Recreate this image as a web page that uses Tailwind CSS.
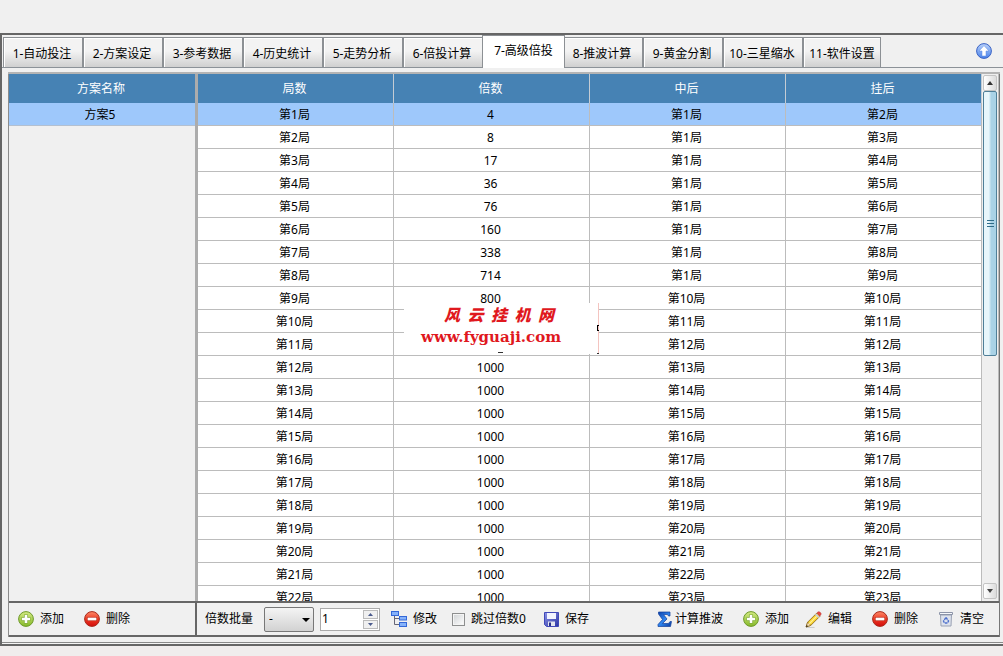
<!DOCTYPE html>
<html lang="zh-CN">
<head>
<meta charset="utf-8">
<title>高级倍投</title>
<script src="https://cdn.jsdelivr.net/npm/@tailwindcss/browser@4"></script>
</head>
<body class="flex h-screen flex-col bg-[#f0eded] text-xs text-black font-['Noto_Sans','Noto_Sans_CJK_SC',sans-serif]">
<svg class="absolute size-0" aria-hidden="true">
  <defs>
    <linearGradient id="gGreen" x1="0" y1="0" x2="0" y2="1"><stop offset="0" stop-color="#d3ea82"/><stop offset="1" stop-color="#86b92a"/></linearGradient>
    <linearGradient id="gRed" x1="0" y1="0" x2="0" y2="1"><stop offset="0" stop-color="#ff8a6a"/><stop offset=".5" stop-color="#ea3a24"/><stop offset="1" stop-color="#d40c0c"/></linearGradient>
    <linearGradient id="gBlue" x1="0" y1="0" x2="1" y2="1"><stop offset="0" stop-color="#0b3fa8"/><stop offset=".5" stop-color="#2f86f0"/><stop offset="1" stop-color="#0a3a9c"/></linearGradient>
    <linearGradient id="gUp" x1="0" y1="0" x2="0" y2="1"><stop offset="0" stop-color="#b9d2fb"/><stop offset="1" stop-color="#4a83ea"/></linearGradient>
    <linearGradient id="gDisk" x1="0" y1="0" x2="1" y2="1"><stop offset="0" stop-color="#8c94e6"/><stop offset="1" stop-color="#2a34a4"/></linearGradient>
    <symbol id="add" viewBox="0 0 16 16"><circle cx="8" cy="8" r="7.4" fill="url(#gGreen)" stroke="#6f9a2c"/><path d="M8 3.6v8.8M3.6 8h8.8" stroke="#7fa83a" stroke-width="4"/><path d="M8 4v8M4 8h8" stroke="#fff" stroke-width="2.6"/></symbol>
    <symbol id="del" viewBox="0 0 16 16"><circle cx="8" cy="8" r="7.4" fill="url(#gRed)" stroke="#a82a1c"/><rect x="3" y="6" width="10" height="4" rx=".6" fill="#b8200f"/><rect x="3.6" y="6.6" width="8.8" height="2.8" fill="#fff"/></symbol>
  </defs>
</svg>

<div class="h-[33px] shrink-0 bg-[#f0f0f0]"></div>

<main class="mb-[10px] flex min-h-0 flex-1 flex-col border-t-2 border-b-2 border-l-2 border-[#666] bg-[#f4f4f4] pb-px">
  <div class="flex min-h-0 flex-1 flex-col border-b border-[#8a8a8a] bg-[#f0f0f0] pb-[5px]">
    <nav class="flex h-[33px] shrink-0 items-end border-b border-[#8c9298] pl-px">
      <div id="tabs" role="tablist" class="flex items-end"></div>
      <button class="mr-[11px] mb-2 ml-auto block" aria-label="向上">
        <svg class="size-4" viewBox="0 0 16 16"><circle cx="8" cy="8" r="7.4" fill="url(#gUp)" stroke="#3a62c4"/><path d="M8 2.6 13 8h-3v5H6V8H3z" fill="#fff" stroke="#5b86e0" stroke-width=".5"/></svg>
      </button>
    </nav>

    <div class="mt-1 mr-[3px] ml-1.5 flex min-h-0 flex-1 border-t-2 border-[#b4b4b4]">
      <section class="flex w-[187px] shrink-0 flex-col border-l border-[#8c8c8c]">
        <div class="min-h-0 flex-1">
          <table class="w-full table-fixed border-separate border-spacing-0 text-center">
            <thead><tr><th class="h-[29px] bg-[#4682b4] p-0 pr-0.5 font-normal text-white">方案名称</th></tr></thead>
            <tbody><tr><td class="h-[23px] border-b border-[#b4c0d0] bg-[#9ec8fb] p-0 pt-0.5 pr-1">方案5</td></tr></tbody>
          </table>
        </div>
        <div class="flex h-9 shrink-0 items-center gap-5 border-y-2 border-b-[#666] border-t-[#666] pl-[9px]">
          <button class="flex items-center gap-1.5"><svg class="size-4"><use href="#add"/></svg>添加</button>
          <button class="flex items-center gap-1.5"><svg class="size-4"><use href="#del"/></svg>删除</button>
        </div>
      </section>

      <section class="flex min-w-0 flex-1 flex-col border-r border-[#777]">
        <div class="flex min-h-0 flex-1 border-l-3 border-[#acacac]">
          <div class="relative min-w-0 flex-1 overflow-hidden">
            <table class="w-full table-fixed border-separate border-spacing-0 bg-white text-center">
              <thead>
                <tr class="bg-[#4682b4] text-white">
                  <th class="h-[29px] border-r border-[#c4ccd4] p-0 pr-0.5 font-normal">局数</th>
                  <th class="h-[29px] border-r border-[#c4ccd4] p-0 pr-0.5 font-normal">倍数</th>
                  <th class="h-[29px] border-r border-[#c4ccd4] p-0 pr-0.5 font-normal">中后</th>
                  <th class="h-[29px] border-r border-[#c4ccd4] p-0 pr-0.5 font-normal">挂后</th>
                </tr>
              </thead>
              <tbody id="rows"></tbody>
            </table>
            <div class="absolute top-[229px] left-[206px] h-[51px] w-[195px] border-r border-[#f4c4c0] bg-white text-[#e0181e]">
              <div class="ml-10 flex h-[22px] w-[110px] items-center justify-between font-['Noto_Sans_CJK_SC',sans-serif] text-base leading-[22px] font-black italic"><span>风</span><span>云</span><span>挂</span><span>机</span><span>网</span></div>
              <div class="ml-[17px] h-6 font-['DejaVu_Serif',serif] text-[15px] leading-6 font-bold">www.fyguaji.com</div>
              <span class="absolute top-[22px] -right-px h-1.5 w-0.5 border border-r-0 border-black"></span>
              <span class="absolute -right-px bottom-0 h-px w-0.5 bg-[#333]"></span>
              <span class="absolute bottom-px left-[94px] h-px w-[5px] bg-[#333]"></span>
            </div>
          </div>
          <div class="flex w-[17px] shrink-0 flex-col border-r border-[#bbb] bg-[#efefef] pr-px pl-px">
            <button class="mt-px flex h-4 items-center justify-center rounded-xs border border-[#c4c4c4] bg-linear-to-r from-white to-[#dcdcdc]" aria-label="向上滚动"><svg class="h-1 w-1.5" viewBox="0 0 6 4"><path d="M0 4 3 0l3 4z" fill="#333"/></svg></button>
            <div class="flex h-[265px] items-center justify-center rounded-xs border border-[#4f7f98] bg-linear-to-r from-[#e8f6fb] from-40% to-[#a9d2e6] to-60%">
              <svg class="h-2 w-[7px]" viewBox="0 0 7 8"><path d="M0 .5h7M0 3.500h7M0 6.500h7" stroke="#2f6c88"/></svg>
            </div>
            <button class="mt-auto mb-0.5 flex h-4 items-center justify-center rounded-xs border border-[#c4c4c4] bg-linear-to-r from-white to-[#dcdcdc]" aria-label="向下滚动"><svg class="h-1 w-1.5" viewBox="0 0 6 4"><path d="M0 0 3 4l3-4z" fill="#444"/></svg></button>
          </div>
        </div>

        <div class="flex h-9 shrink-0 items-center justify-between border-y-2 border-l-2 border-[#666] pr-[15px] pl-2">
          <div class="flex items-center">
            <label for="op">倍数批量</label>
            <div class="relative ml-[11px]">
              <select id="op" class="block h-[25px] w-[50px] appearance-none rounded-xs border border-[#777] bg-linear-to-b from-[#f4f4f4] to-[#d2d2d2] pl-1"><option>-</option></select>
              <svg class="pointer-events-none absolute top-[11px] right-1 h-1 w-2" viewBox="0 0 8 4"><path d="M0 0h8L4 4z"/></svg>
            </div>
            <div class="ml-1.5 flex h-[23px] w-[60px] border border-[#aaa] bg-white">
              <input aria-label="倍数" value="1" class="w-[42px] min-w-0 pl-px outline-none">
              <div class="flex flex-1 flex-col gap-px py-px pr-px">
                <button class="flex flex-1 items-center justify-center border border-[#bbb] bg-[#f0f0f0]" aria-label="增加"><svg class="h-[3px] w-[5px]" viewBox="0 0 5 3"><path d="M0 3 2.500 0 5 3z" fill="#4a5a8c"/></svg></button>
                <button class="flex flex-1 items-center justify-center border border-[#bbb] bg-[#f0f0f0]" aria-label="减少"><svg class="h-[3px] w-[5px]" viewBox="0 0 5 3"><path d="M0 0 2.500 3 5 0z" fill="#4a5a8c"/></svg></button>
              </div>
            </div>
            <button class="ml-[11px] flex items-center gap-1.5"><svg class="size-4" viewBox="0 0 16 16" fill="#86b2fa" stroke="#3468d8"><path d="M3.500 5v8.500H9M3.500 7.500H9" fill="none" stroke="#667"/><rect x=".5" y=".5" width="7" height="4"/><rect x="8.500" y="5.500" width="7" height="3.500"/><rect x="8.500" y="11.500" width="7" height="4"/></svg>修改</button>
            <label class="ml-[15px] flex items-center gap-1.5"><input type="checkbox" class="size-[13px] appearance-none border border-[#8e8f8f] bg-linear-to-br from-[#cfd2d4] to-white shadow-[inset_0_0_0_1px_#f4f4f4]">跳过倍数0</label>
            <button class="ml-[18px] flex items-center gap-1.5"><svg class="h-[15px] w-[15px]" viewBox="0 0 15 15"><path d="M.5.5h14v14h-12l-2-2z" fill="url(#gDisk)" stroke="#4048b8"/><path d="M3 1h9v6H3z" fill="#f2f4ff"/><path d="M4 9.500h7V14H4z" fill="#e4e6f0"/><path d="M5 10.500h2V14H5z" fill="#28308c"/></svg>保存</button>
          </div>
          <div class="flex items-center gap-5">
            <button class="flex items-center gap-0.5"><svg class="size-4" viewBox="0 0 16 16"><path d="M1.500 1H13v4h-1.500L10.500 3.500H6.500L10 8l-4.500 4.500h6L13 10.500h1.500L13.500 15.500H1v-2L5.500 8.500 1.500 3z" fill="url(#gBlue)" stroke="#123f9c" stroke-width=".7"/></svg>计算推波</button>
            <button class="flex items-center gap-1.5"><svg class="size-4"><use href="#add"/></svg>添加</button>
            <button class="-ml-1 flex items-center gap-1.5"><svg class="size-[17px]" viewBox="0 0 16 16"><path d="M1 15.500h8" stroke="#ccc"/><path d="M1 15 2.500 10.500 11 2l3 3-8.500 8.500z" fill="#f9d532" stroke="#8a6414" stroke-width=".8"/><path d="M1 15l1.500-4.500 3 3z" fill="#f5dfb8" stroke="#8a6414" stroke-width=".6"/><path d="M1 15l.6-1.900 1.300 1.300z" fill="#222"/><path d="M4 12 12.500 3.500" stroke="#fff19a"/><path d="m10 3 3 3" stroke="#c8ccd8" stroke-width="1.600"/><path d="m11.200 1.800 1-.9q1-.7 2 .3l.5.5q1 1 .1 2l-.9 1z" fill="#e84a42" stroke="#b83030" stroke-width=".5"/></svg>编辑</button>
            <button class="flex items-center gap-1.5"><svg class="size-4"><use href="#del"/></svg>删除</button>
            <button class="flex items-center gap-1.5"><svg class="size-4" viewBox="0 0 16 16"><path d="M2.500 4h11l-.5 11H3z" fill="#dde2ec" stroke="#9aa2b4"/><path d="M1.500 1.500h13v2h-13z" fill="#f6f8fb" stroke="#8c94a8"/><path d="M8 6.500 10.500 10 9.500 12h-3L5.500 10z" fill="none" stroke="#4d70cc" stroke-width="1.400" stroke-dasharray="2.600 .7"/></svg>清空</button>
          </div>
        </div>
      </section>
    </div>
  </div>
</main>

<script>
  const names = ['自动投注', '方案设定', '参考数据', '历史统计', '走势分析', '倍投计算', '高级倍投', '推波计算', '黄金分割', '三星缩水', '软件设置'];
  const normal = 'h-[30px] w-20 border border-b-0 border-[#8c9094] bg-linear-to-b from-[#f3f3f3] from-45% to-[#d0d0d0] pt-0.5 pr-0.5 whitespace-nowrap shadow-[inset_1px_1px_0_#fff]';
  const last = 'h-[30px] w-[78px] border border-b-0 border-[#8c9094] bg-linear-to-b from-[#f3f3f3] from-45% to-[#d0d0d0] pt-0.5 whitespace-nowrap shadow-[inset_1px_1px_0_#fff]';
  const active = 'relative -mr-0.5 -mb-px -ml-px h-[33px] w-[83px] border border-b-0 border-[#8c9094] bg-white pb-0.5 whitespace-nowrap';
  document.getElementById('tabs').innerHTML = names.map((n, i) =>
    `<button role="tab" aria-selected="${i === 6}" class="${i === 6 ? active : i === 10 ? last : normal}">${i + 1}-${n}</button>`).join('');

  const mult = [4, 8, 17, 36, 76, 160, 338, 714, 800, '', ''];
  let html = '';
  for (let i = 1; i <= 22; i++) {
    const cells = [`第${i}局`, mult[i - 1] ?? 1000, i < 9 ? '第1局' : `第${i + 1}局`, `第${i + 1}局`];
    html += `<tr class="${i === 1 ? 'bg-[#9ec8fb]' : 'bg-white'}">` +
      cells.map(c => `<td class="h-[23px] border-r border-b border-[#bcbcbc] p-0 pt-0.5 pr-0.5">${c}</td>`).join('') + '</tr>';
  }
  document.getElementById('rows').innerHTML = html;
</script>
</body>
</html>
